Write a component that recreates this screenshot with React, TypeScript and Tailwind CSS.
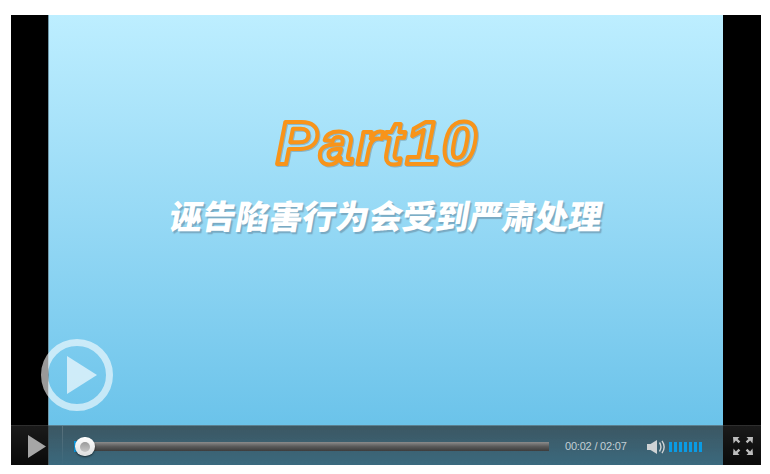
function FullscreenIcon() {
  return (
    <svg width="22" height="20" viewBox="0 0 22 20" className="text-[#bdbdbd]" fill="currentColor">
      <path d="M1 1h6.500L5.600 2.900l2.700 2.700-1.700 1.700-2.700-2.700L1.500 7.500z" />
      <path d="M21 1h-6.500l1.900 1.900-2.700 2.700 1.700 1.700 2.700-2.700 2.400 2.900z" />
      <path d="M1 19h6.500l-1.900-1.900 2.700-2.700-1.700-1.700-2.700 2.700-2.400-2.900z" />
      <path d="M21 19h-6.500l1.900-1.900-2.700-2.700 1.700-1.700 2.700 2.700 2.400-2.900z" />
    </svg>
  );
}

function VolumeIcon() {
  return (
    <svg width="19" height="14" viewBox="0 0 19 14" className="text-[#cfd3d5]">
      <path d="M0 4h3.500L10 0v14l-6.500-4H0z" fill="currentColor" />
      <path d="M12.500 2.500c1.800 2.800 1.800 6.200 0 9M15 .8c2.700 3.900 2.700 8.500 0 12.400" fill="none" stroke="currentColor" strokeWidth="1.400" />
    </svg>
  );
}

function VolumeBars() {
  return (
    <div className="ml-[3px] flex gap-[2px]">
      {[0, 1, 2, 3, 4, 5, 6].map((bar) => (
        <div key={bar} className="h-[10px] w-[3px] bg-[#0a9be4]" />
      ))}
    </div>
  );
}

function ControlBar() {
  return (
    <div className="absolute inset-x-0 bottom-0 flex h-10 border-t border-white/15 bg-gradient-to-b from-[#262626b0] to-[#14141480]">
      <div className="flex w-[37px] items-center justify-end pr-[2px] pt-[2px]">
        <svg width="18" height="23" viewBox="0 0 18 23" className="text-[#a6a6a6]" fill="currentColor">
          <path d="M0 0l18 11.500L0 23z" />
        </svg>
      </div>
      <div className="ml-[14px] w-[1px] bg-gradient-to-b from-white/15 to-white/0" />
      <div className="flex flex-1 items-center pl-[11px] pt-[2px]">
        <div className="relative h-[9px] w-[475px] bg-gradient-to-b from-[#8c8c8c] via-[#5a5a5a] to-[#3c3c3c]">
          <div className="absolute left-0 -top-[1px] h-[11px] w-[4px] bg-[#0a9be4]" />
          <div className="absolute left-[1px] -top-[5px] flex h-[19px] w-[20px] items-center justify-center rounded-full bg-gradient-to-b from-white to-[#dedede] shadow-[0_1px_2px_rgba(0,0,0,0.6)]">
            <div className="h-[10px] w-[10px] rounded-full bg-gradient-to-b from-[#9a9a9a] to-[#c8c8c8]" />
          </div>
        </div>
        <span className="ml-[16px] w-[82px] font-['Liberation_Sans',sans-serif] text-[11px] tracking-[-0.2px] text-[#c2ced4]">00:02 / 02:07</span>
        <VolumeIcon />
        <VolumeBars />
      </div>
      <div className="flex w-[38px] items-center justify-center pl-[2px] pt-[1px]">
        <FullscreenIcon />
      </div>
    </div>
  );
}

export default function App() {
  return (
    <div className="h-[474px] w-[770px] bg-white pl-[11px] pt-[15px]">
      <div className="relative flex h-[450px] w-[750px] bg-black">
        <div className="w-[37px]" />
        <div className="flex w-[675px] flex-col items-center border-l border-[#6f97a8] bg-gradient-to-b from-[#bdeeff] to-[#62bfe8] pt-[94px]">
          <svg width="216" height="70" viewBox="0 0 216 70" className="mr-[16px] drop-shadow-[1px_1px_0.5px_rgba(90,100,110,0.35)]">
            <text
              x="6"
              y="55"
              fill="none"
              stroke="#f8941a"
              strokeWidth="4"
              strokeLinejoin="round"
              fontFamily="'Liberation Sans', sans-serif"
              fontSize="62"
              fontWeight="700"
              fontStyle="italic"
              letterSpacing="2.2"
            >
              Part10
            </text>
          </svg>
          <div className="mt-[11px] -skew-x-[10deg] font-['Noto_Sans_CJK_SC',sans-serif] text-[33.3px] leading-[50px] font-black text-white [text-shadow:2px_2px_1px_rgba(80,100,120,0.4)]">
            诬告陷害行为会受到严肃处理
          </div>
        </div>
        <div className="w-[38px]" />
        <div className="absolute left-[30px] top-[324px] flex h-[72px] w-[72px] items-center justify-center rounded-full border-[7px] border-white/60 pl-[10px]">
          <svg width="30" height="38" viewBox="0 0 30 38" className="text-white/65" fill="currentColor">
            <path d="M0 0l30 19L0 38z" />
          </svg>
        </div>
        <ControlBar />
      </div>
    </div>
  );
}
